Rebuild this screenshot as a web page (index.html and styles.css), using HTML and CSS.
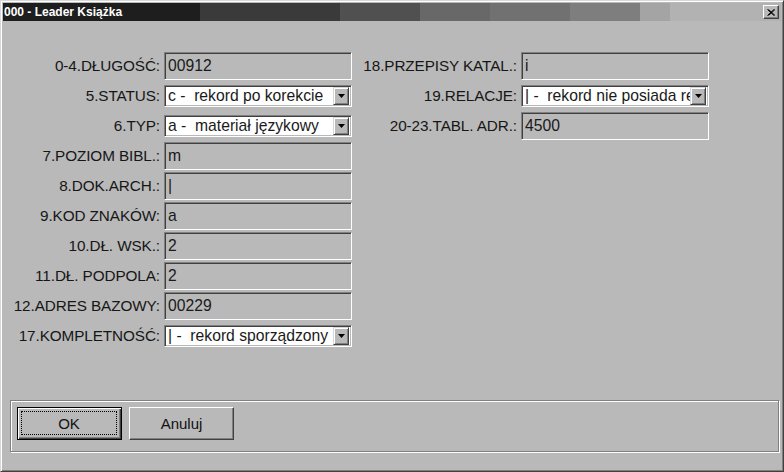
FILE: index.html
```html
<!DOCTYPE html>
<html lang="pl">
<head>
<meta charset="utf-8">
<title>000 - Leader Książka</title>
<link rel="stylesheet" href="styles.css">
</head>
<body>
<div class="window">
  <div class="titlebar">
    <span class="title">000 - Leader Książka</span>
    <span class="close"><svg width="8" height="7" viewBox="0 0 8 7"><path d="M0.5 0.5 L7 6.5 M1.5 0.5 L8 6.5 M7 0.5 L0.5 6.5 M8 0.5 L1.5 6.5" stroke="#000" stroke-width="1" fill="none"/></svg></span>
  </div>
  <div class="body">
    <div class="form">
      <div class="col col-left">
        <span class="label">0-4.DŁUGOŚĆ:</span><div class="field">00912</div>
        <span class="label">5.STATUS:</span><div class="combo"><span class="combo-text">c -  rekord po korekcie</span><span class="combo-btn"><svg width="7" height="4" viewBox="0 0 7 4"><path d="M0 0H7L3.5 4Z" fill="#000"/></svg></span></div>
        <span class="label">6.TYP:</span><div class="combo"><span class="combo-text">a -  materiał językowy</span><span class="combo-btn"><svg width="7" height="4" viewBox="0 0 7 4"><path d="M0 0H7L3.5 4Z" fill="#000"/></svg></span></div>
        <span class="label">7.POZIOM BIBL.:</span><div class="field">m</div>
        <span class="label">8.DOK.ARCH.:</span><div class="field">|</div>
        <span class="label">9.KOD ZNAKÓW:</span><div class="field">a</div>
        <span class="label">10.DŁ. WSK.:</span><div class="field">2</div>
        <span class="label">11.DŁ. PODPOLA:</span><div class="field">2</div>
        <span class="label">12.ADRES BAZOWY:</span><div class="field">00229</div>
        <span class="label">17.KOMPLETNOŚĆ:</span><div class="combo"><span class="combo-text">| -  rekord sporządzony z</span><span class="combo-btn"><svg width="7" height="4" viewBox="0 0 7 4"><path d="M0 0H7L3.5 4Z" fill="#000"/></svg></span></div>
      </div>
      <div class="col col-right">
        <span class="label">18.PRZEPISY KATAL.:</span><div class="field">i</div>
        <span class="label">19.RELACJE:</span><div class="combo"><span class="combo-text">| -  rekord nie posiada re</span><span class="combo-btn"><svg width="7" height="4" viewBox="0 0 7 4"><path d="M0 0H7L3.5 4Z" fill="#000"/></svg></span></div>
        <span class="label">20-23.TABL. ADR.:</span><div class="field">4500</div>
      </div>
    </div>
    <div class="frame">
      <button class="btn btn-default" type="button"><span class="focus">OK</span></button>
      <button class="btn" type="button">Anuluj</button>
    </div>
  </div>
</div>
</body>
</html>
```
FILE: styles.css
```css
html, body {
  margin: 0;
  padding: 0;
  background: #b9b9b9;
}

.window {
  box-sizing: border-box;
  width: 784px;
  height: 472px;
  border: 1px solid;
  border-color: #d8d8d8 #404040 #404040 #d8d8d8;
  box-shadow: inset 1px 1px #fff, inset -1px -1px #808080;
  padding: 2px;
  background: #b9b9b9;
  display: flex;
  flex-direction: column;
  font-family: "Liberation Sans", Arial, sans-serif;
  color: #111;
}

.titlebar {
  height: 18px;
  flex: none;
  display: flex;
  align-items: center;
  justify-content: space-between;
  padding: 0 2px 0 1px;
  background: linear-gradient(to right,
    #1e1e1e 0 197px,
    #3a3a3a 197px 337px,
    #505050 337px 417px,
    #686868 417px 487px,
    #717171 487px 567px,
    #7e7e7e 567px 637px,
    #a4a4a4 637px 667px,
    #b2b2b2 667px);
}

.title {
  color: #fff;
  font-weight: bold;
  font-size: 12px;
  white-space: nowrap;
}

.close {
  box-sizing: border-box;
  width: 16px;
  height: 14px;
  background: #b9b9b9;
  border: 1px solid;
  border-color: #fff #404040 #404040 #fff;
  box-shadow: inset -1px -1px #808080;
  display: flex;
  align-items: center;
  justify-content: center;
}

.body {
  flex: 1;
  display: flex;
  flex-direction: column;
}

.form {
  display: flex;
  align-items: flex-start;
  gap: 3px;
  margin-top: 30px;
  padding-left: 7px;
}

.col {
  display: grid;
  grid-auto-rows: 30px;
  align-items: center;
  column-gap: 3px;
}

.col-left {
  grid-template-columns: 151px 188px;
}

.col-right {
  grid-template-columns: 163px 188px;
}

.label {
  text-align: right;
  font-size: 15.3px;
  letter-spacing: -0.1px;
  white-space: nowrap;
  padding-right: 1px;
  color: #161616;
}

.field {
  box-sizing: border-box;
  height: 28px;
  border: 1px solid;
  border-color: #808080 #fff #fff #808080;
  box-shadow: inset 1px 1px #404040, inset -1px -1px #b9b9b9;
  padding: 0 3px 1px;
  font-size: 15.7px;
  color: #1a1a1a;
  display: flex;
  align-items: center;
  white-space: pre;
}

.combo {
  box-sizing: border-box;
  height: 22px;
  border: 1px solid;
  border-color: #808080 #fff #fff #808080;
  box-shadow: inset 1px 1px #404040, inset -1px -1px #b9b9b9;
  background: #fff;
  padding: 2px;
  display: flex;
  align-items: center;
  font-size: 15.7px;
  color: #1a1a1a;
}

.combo-text {
  flex: 1;
  min-width: 0;
  overflow: hidden;
  white-space: pre;
  padding-left: 1px;
}

.combo-btn {
  box-sizing: border-box;
  flex: none;
  width: 16px;
  height: 18px;
  border: 1px solid;
  border-color: #d8d8d8 #404040 #404040 #d8d8d8;
  box-shadow: inset 1px 1px #fff, inset -1px -1px #808080;
  background: #b9b9b9;
  display: flex;
  align-items: center;
  justify-content: center;
}

.frame {
  box-sizing: border-box;
  height: 52px;
  margin: auto 2px 17px 7px;
  border: 1px solid #808080;
  box-shadow: inset 1px 1px #fff, 1px 1px #fff;
  display: flex;
  gap: 7px;
  padding: 6px 0 0 6px;
}

.btn {
  box-sizing: border-box;
  width: 105px;
  height: 33px;
  margin: 0;
  padding: 0;
  font-family: "Liberation Sans", Arial, sans-serif;
  font-size: 15px;
  color: #111;
  background: #b9b9b9;
  border: 1px solid;
  border-color: #fff #404040 #404040 #fff;
  box-shadow: inset -1px -1px #808080;
  border-radius: 0;
}

.btn-default {
  border: 1px solid #000;
  box-shadow: inset 1px 1px #fff, inset -1px -1px #404040, inset -2px -2px #808080;
  display: flex;
  padding: 3px 4px 4px 3px;
}

.focus {
  flex: 1;
  border: 1px dotted #000;
  display: flex;
  align-items: center;
  justify-content: center;
}
```
